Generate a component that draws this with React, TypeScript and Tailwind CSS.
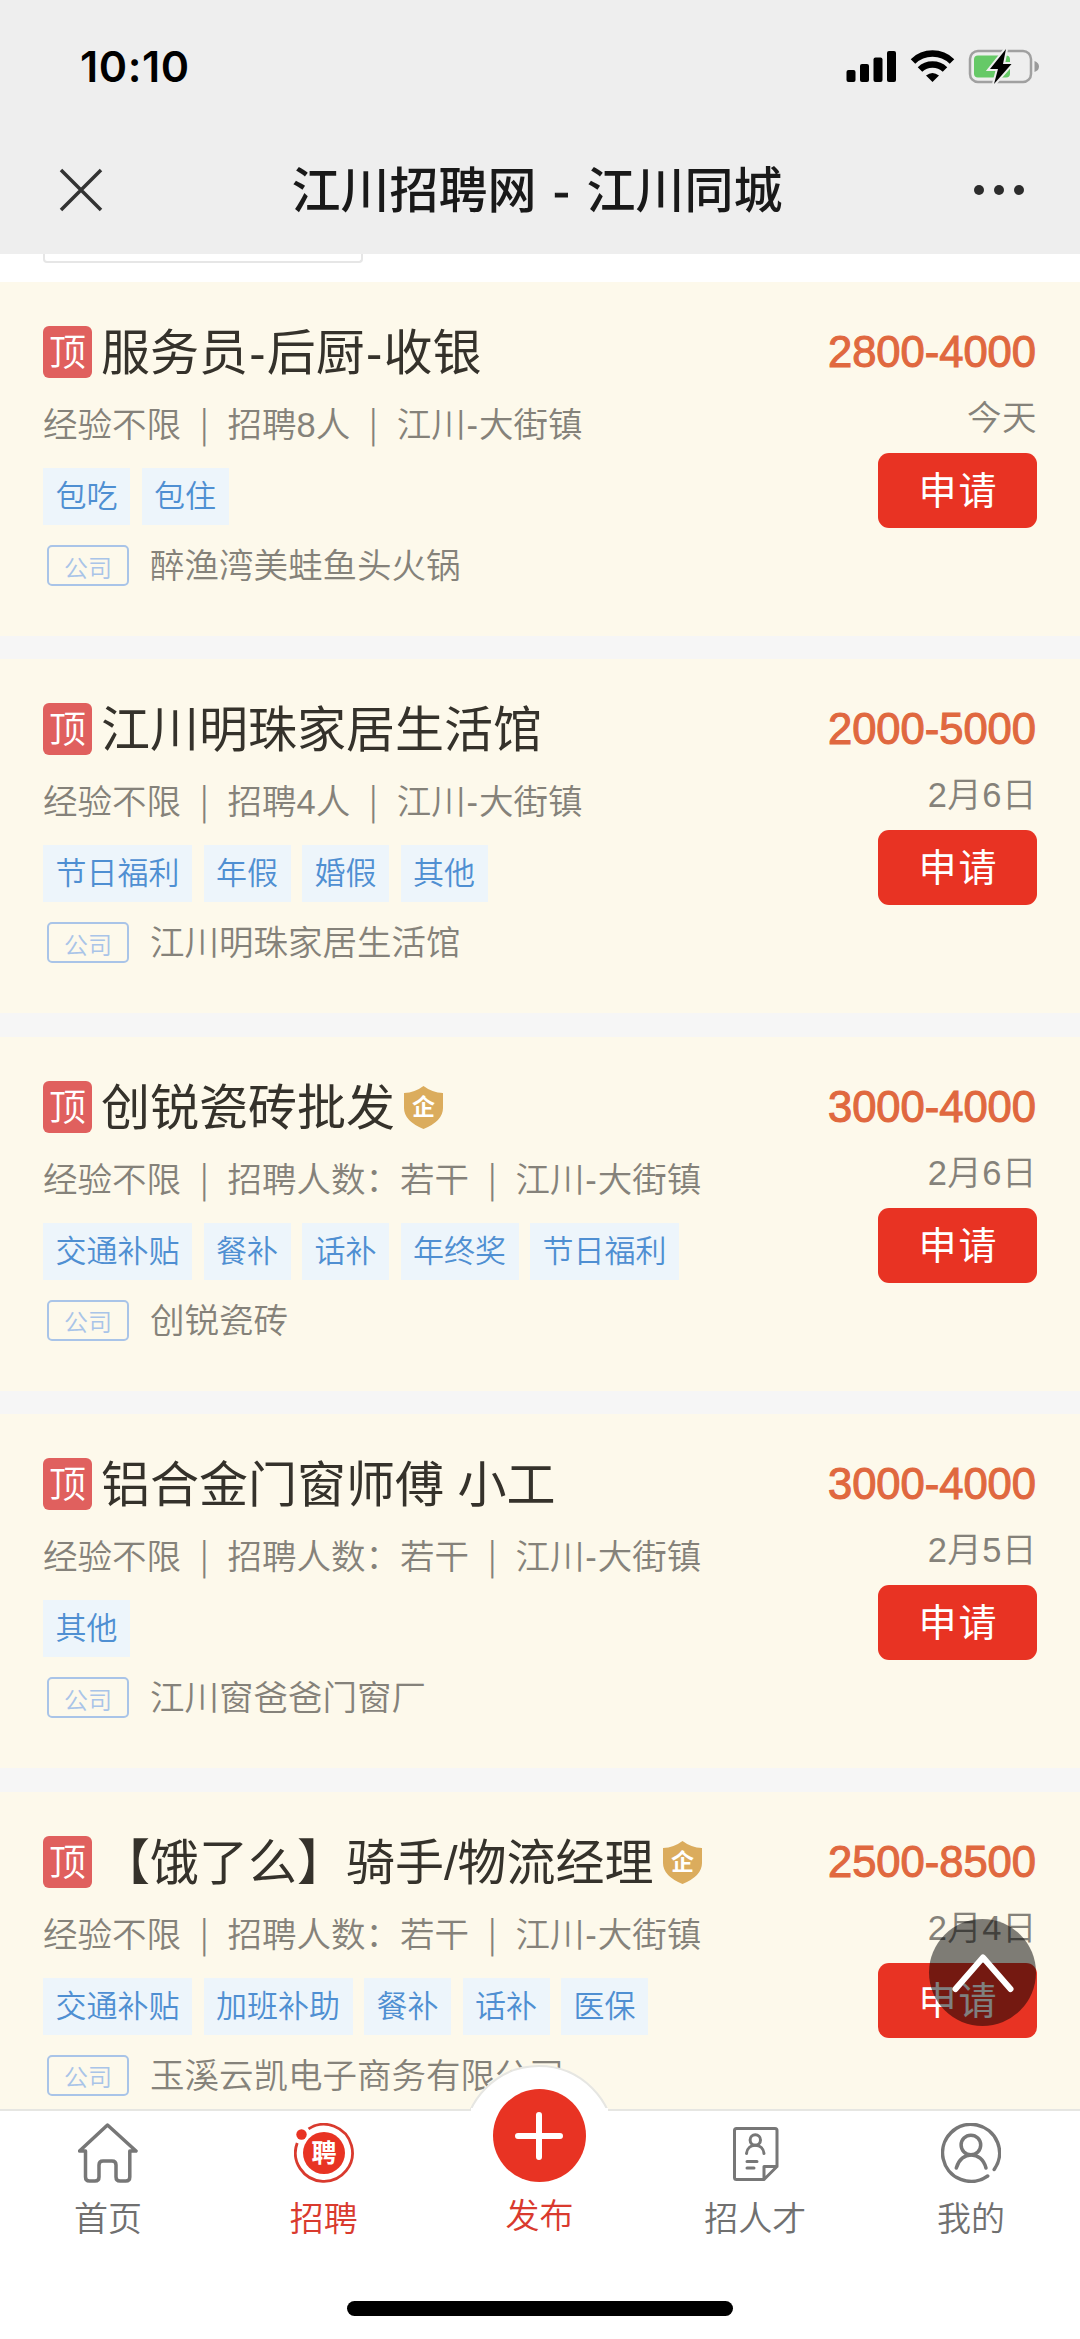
import { Fragment } from "react";

type Job = {
  title: string;
  verified?: boolean;
  meta: string[];
  tags: string[];
  company: string;
  salary: string;
  date: string;
};

const jobs: Job[] = [
  {
    title: "服务员-后厨-收银",
    meta: ["经验不限", "招聘8人", "江川-大街镇"],
    tags: ["包吃", "包住"],
    company: "醉渔湾美蛙鱼头火锅",
    salary: "2800-4000",
    date: "今天",
  },
  {
    title: "江川明珠家居生活馆",
    meta: ["经验不限", "招聘4人", "江川-大街镇"],
    tags: ["节日福利", "年假", "婚假", "其他"],
    company: "江川明珠家居生活馆",
    salary: "2000-5000",
    date: "2月6日",
  },
  {
    title: "创锐瓷砖批发",
    verified: true,
    meta: ["经验不限", "招聘人数：若干", "江川-大街镇"],
    tags: ["交通补贴", "餐补", "话补", "年终奖", "节日福利"],
    company: "创锐瓷砖",
    salary: "3000-4000",
    date: "2月6日",
  },
  {
    title: "铝合金门窗师傅 小工",
    meta: ["经验不限", "招聘人数：若干", "江川-大街镇"],
    tags: ["其他"],
    company: "江川窗爸爸门窗厂",
    salary: "3000-4000",
    date: "2月5日",
  },
  {
    title: "【饿了么】骑手/物流经理",
    verified: true,
    meta: ["经验不限", "招聘人数：若干", "江川-大街镇"],
    tags: ["交通补贴", "加班补助", "餐补", "话补", "医保"],
    company: "玉溪云凯电子商务有限公司",
    salary: "2500-8500",
    date: "2月4日",
  },
];

function StatusBar() {
  return (
    <div className="flex h-[132px] items-center justify-between pl-[80px] pr-[40px]">
      <span className="font-[Inter] text-[43px] font-semibold leading-none tracking-[0.6px] text-black">
        10:10
      </span>
      <svg className="h-[36px] w-[194px]" viewBox="846 48 194 36">
        <rect x="846.5" y="70" width="9" height="12" rx="2" />
        <rect x="860" y="64" width="9" height="18" rx="2" />
        <rect x="873.5" y="57.5" width="9" height="24.5" rx="2" />
        <rect x="887" y="51" width="9" height="31" rx="2" />
        <g fill="none" stroke="#000" strokeWidth="6.5">
          <path d="M913 61.5a28 28 0 0 1 39 0" />
          <path d="M920 69.5a18 18 0 0 1 25 0" />
        </g>
        <path d="M926 75.5q6.5-5 13 0L932.5 82Z" />
        <rect x="970" y="51" width="61" height="31" rx="8" fill="none" stroke="#a0a0a0" strokeWidth="2.5" />
        <path d="M1034.5 61q4.5 1.5 4.5 5.500t-4.5 5.500Z" fill="#9a9a9a" />
        <rect x="974" y="55.5" width="36" height="22" rx="4" fill="#66c967" />
        <path
          d="M1006 49 990 69h8l-4 15 17.5-20h-8.5l3-15Z"
          stroke="#eee"
          strokeWidth="4"
          paintOrder="stroke"
        />
      </svg>
    </div>
  );
}

function TitleBar() {
  return (
    <div className="flex h-[122px] items-center justify-between pl-[59px] pr-[56px] pb-[6px]">
      <svg className="h-[44px] w-[44px]" viewBox="0 0 44 44" stroke="#333" strokeWidth="3.5">
        <path d="M2 2 42 42M42 2 2 42" />
      </svg>
      <h1 className="mr-[3px] pt-[2px] text-[49px] font-medium leading-none text-[#191919]">
        江川招聘网
        <span className="inline-block w-[50px] text-center [-webkit-text-stroke:1.2px_#191919]">-</span>
        江川同城
      </h1>
      <div className="flex gap-[10px]">
        <i className="size-[10px] rounded-full bg-[#2c2c2c]" />
        <i className="size-[10px] rounded-full bg-[#2c2c2c]" />
        <i className="size-[10px] rounded-full bg-[#2c2c2c]" />
      </div>
    </div>
  );
}

function Shield() {
  return (
    <svg className="ml-[9px] mt-[2px] h-[43px] w-[39px]" viewBox="0 0 39 43">
      <path
        d="M19.5 0Q28 6.5 39 7V22q0 13-19.5 21Q0 35 0 22V7Q11 6.5 19.5 0Z"
        fill="#dbac5d"
      />
      <text x="19.5" y="29" textAnchor="middle" fontSize="23" fontWeight="700" fill="#fff">
        企
      </text>
    </svg>
  );
}

// hyphens get a little air next to the Chinese glyphs
function Dashed({ text }: { text: string }) {
  return text.split("-").map((part, i) => (
    <Fragment key={part}>
      {i > 0 && <span className="px-[0.025em]">-</span>}
      {part}
    </Fragment>
  ));
}

function JobCard({ job }: { job: Job }) {
  return (
    <article className="flex h-[354px] shrink-0 justify-between bg-[#fdf9eb] pl-[43px] pr-[43px] pt-[44px]">
      <div className="flex flex-col items-start whitespace-nowrap">
        <div className="flex h-[52px] items-center">
          <span className="flex h-[52px] w-[49px] items-center justify-center rounded-[6px] bg-[#e0605e] pt-[3px] text-[37px] font-[350] leading-none text-white">
            顶
          </span>
          <h2 className="ml-[9px] pt-[2px] text-[49px] leading-[52px] text-[#35322b]">
            <Dashed text={job.title} />
          </h2>
          {job.verified && <Shield />}
        </div>
        <p className="mt-[27px] h-[40px] text-[34.5px] font-[350] leading-[40px] text-[#85827a]">
          {job.meta.map((item, i) => (
            <Fragment key={item}>
              {i > 0 && (
                <span className="inline-block w-[46.5px] text-center font-['Noto_Sans_CJK_SC'] leading-[20px]">
                  |
                </span>
              )}
              <Dashed text={item} />
            </Fragment>
          ))}
        </p>
        <div className="mt-[23px] flex gap-[11.5px]">
          {job.tags.map((tag) => (
            <span
              key={tag}
              className="h-[57px] bg-[#edf5fb] px-[12.5px] text-[31px] font-[350] leading-[57px] text-[#4f8fd2]"
            >
              {tag}
            </span>
          ))}
        </div>
        <div className="mt-[20px] flex h-[41px] items-center">
          <span className="ml-[4px] flex h-[41px] w-[82px] items-center justify-center rounded-[5px] border-2 border-[#a9c4e8] pt-[6px] text-[24px] font-[350] leading-none text-[#a9c4e8]">
            公司
          </span>
          <span className="ml-[21px] pt-[2px] text-[34.5px] font-[350] leading-[41px] text-[#85827a]">
            {job.company}
          </span>
        </div>
      </div>
      <div className="flex flex-col items-end">
        <span className="pr-[1px] text-[43.5px] leading-[52px] text-[#e0683f] [-webkit-text-stroke:1.1px_#e0683f]">
          {job.salary}
        </span>
        <span className="mt-[20px] text-[34.5px] font-[350] leading-[40px] tracking-[0.5px] text-[#85827a]">
          {job.date}
        </span>
        <button className="mt-[15px] h-[75px] w-[159px] rounded-[11px] bg-[#e83323] pl-[2px] text-[38px] leading-[76px] tracking-[2px] text-white">
          申请
        </button>
      </div>
    </article>
  );
}

function HomeIcon() {
  return (
    <svg className="size-[60px]" viewBox="0 0 60 60" fill="none" stroke="#777" strokeWidth="3.5" strokeLinejoin="round">
      <path d="M7.5 28H1.5L29.5 2 58 28H51.8V54q0 4-4 4H42q-4 0-4-4V42q0-4-4-4H25q-4 0-4 4V54q0 4-4 4H11.5q-4 0-4-4Z" />
    </svg>
  );
}

function RecruitIcon() {
  return (
    <svg className="size-[60px]" viewBox="0 0 60 60">
      <path d="M14.5 5.9A28.5 28.5 0 1 1 3.2 20" fill="none" stroke="#d93a2e" strokeWidth="2.8" />
      <circle cx="7.5" cy="11.5" r="5.2" fill="#e83323" />
      <circle cx="30" cy="30" r="21" fill="#e83323" />
      <text x="30" y="39" textAnchor="middle" fontSize="25" fontWeight="700" fill="#fff">
        聘
      </text>
    </svg>
  );
}

function TalentIcon() {
  return (
    <svg className="size-[60px]" viewBox="0 0 60 60" fill="none" stroke="#777" strokeWidth="3" strokeLinecap="round" strokeLinejoin="round">
      <path d="M39 56.5H11.5a2 2 0 0 1-2-2V7.5a2 2 0 0 1 2-2H50a2 2 0 0 1 2 2V43.5ZM39 56.5V43.5H52" />
      <circle cx="30.3" cy="17" r="5.2" />
      <path d="M21.5 30.5c1-11 16.5-11 17.5 0M22 38.5H32M22 45H29" />
    </svg>
  );
}

function MeIcon() {
  return (
    <svg className="size-[60px]" viewBox="0 0 60 60" fill="none" stroke="#777" strokeWidth="3.5" strokeLinecap="round">
      <path d="M46.7 53A28.5 28.5 0 1 1 53.2 46.5" />
      <circle cx="29.9" cy="22" r="9.8" />
      <path d="M15.3 45C20 27.5 40.5 27.5 45 45" />
    </svg>
  );
}

const tabs = [
  { label: "首页", icon: <HomeIcon /> },
  { label: "招聘", icon: <RecruitIcon />, active: true },
  { label: "发布", publish: true },
  { label: "招人才", icon: <TalentIcon /> },
  { label: "我的", icon: <MeIcon /> },
];

function TabBar() {
  return (
    <footer className="relative flex h-[230px] shrink-0 flex-col items-center border-t-2 border-[#e6e6e2] bg-white">
      {/* raised bump behind the publish button */}
      <div className="absolute left-[463px] top-[-46px] h-[46px] w-[152px] overflow-hidden">
        <div className="size-[152px] rounded-full border-2 border-[#e6e6e2] bg-white" />
      </div>
      <div className="absolute left-[471px] top-[-3px] h-[4px] w-[137px] bg-white" />
      <nav className="relative grid w-full grid-cols-5 pr-px">
        {tabs.map((tab) =>
          tab.publish ? (
            <div key={tab.label} className="-mt-[22px] flex flex-col items-center">
              <span className="flex size-[93px] items-center justify-center rounded-full bg-[#e83323]">
                <svg className="size-[50px]" viewBox="0 0 50 50" stroke="#fff" strokeWidth="6" strokeLinecap="round">
                  <path d="M25 4V46M4 25H46" />
                </svg>
              </span>
              <span className="mt-[14px] text-[34px] font-[350] leading-[40px] text-[#d93a2e]">{tab.label}</span>
            </div>
          ) : (
            <div key={tab.label} className="flex flex-col items-center pt-[12px]">
              {tab.icon}
              <span
                className={`mt-[16px] text-[34px] font-[350] leading-[40px] ${tab.active ? "text-[#d93a2e]" : "text-[#707070]"}`}
              >
                {tab.label}
              </span>
            </div>
          )
        )}
      </nav>
      <div className="mb-[23px] mt-auto h-[15px] w-[386px] rounded-full bg-black" />
    </footer>
  );
}

export default function App() {
  return (
    <div className="relative flex h-[2339px] w-[1080px] flex-col overflow-hidden bg-white font-['Liberation_Sans','Noto_Sans_CJK_SC',sans-serif]">
      <header className="h-[254px] shrink-0 bg-[#eee]">
        <StatusBar />
        <TitleBar />
      </header>
      <main className="flex min-h-0 flex-1 flex-col overflow-hidden">
        <div className="h-[28px] shrink-0 bg-white pl-[43px]">
          <div className="h-[9px] w-[320px] rounded-b-[4px] border-2 border-t-0 border-[#e6e6e6]" />
        </div>
        <div className="flex flex-col gap-[23.4px] bg-[#f6f6f6]">
          {jobs.map((job) => (
            <JobCard key={job.title} job={job} />
          ))}
        </div>
      </main>
      <TabBar />
      <button className="absolute left-[929px] top-[1919px] size-[107px] rounded-full bg-black/50">
        <svg className="size-[107px]" viewBox="0 0 107 107" fill="none" stroke="#fff" strokeWidth="6" strokeLinecap="round" strokeLinejoin="round">
          <path d="M26.5 70 54 38.5 81.5 70" />
        </svg>
      </button>
    </div>
  );
}
